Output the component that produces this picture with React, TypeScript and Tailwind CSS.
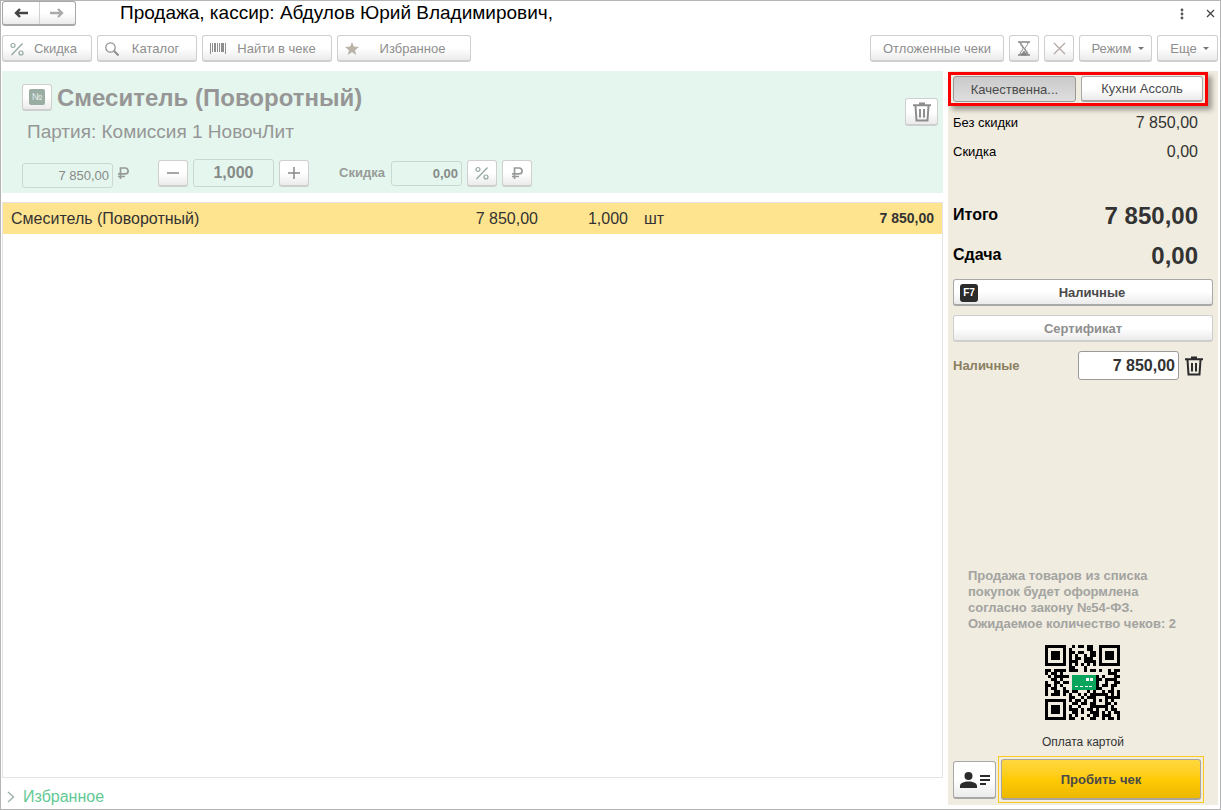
import type { ReactNode } from "react";

const softButton =
  "flex items-center justify-center rounded-[3px] border border-b-2 border-[#cfcfcf] bg-linear-to-b from-white from-50% to-[#ebebeb] pt-px text-[13px] text-[#8e8e8e]";
const hardButton =
  "flex items-center justify-center rounded-[3px] border border-b-2 border-[#a8a8a8] bg-linear-to-b from-white from-50% to-[#ebebeb] pt-px text-[13px] text-[#4a4a4a]";
const softInput =
  "rounded-[3px] border border-[#cbd8d0] bg-transparent text-[#858b88]";

const qrRows = [
  "#######..#.##.##..#######",
  "#.....#.#.....##..#.....#",
  "#.###.#.##.##..##.#.###.#",
  "#.###.#.#.#..#.##.#.###.#",
  "#.###.#.#.##.###..#.###.#",
  "#.....#.###..####.#.....#",
  "#######.#.#.#.#.#.#######",
  "........##...#...........",
  "##.####.###..#.##.#..#.##",
  "#.##.#...............###.",
  ".#.#####.........#.#...##",
  "..##.#...........##.####.",
  "#..##.##.........#..#..##",
  "##.#.#...........#.##.##.",
  "#.##..#..........##...#..",
  "#..##.##.##...#.#..#.##.#",
  "#.###.#.#..#.#.######.#.#",
  "........##..#.###...#####",
  "#######.#.##.#..#.#.#.#..",
  "#.....#..##.##.##...##.#.",
  "#.###.#.#..#...######.#..",
  "#.###.#.###.#.##.#..#.##.",
  "#.###.#..##.#..###.#.#.##",
  "#.....#.#.#...#.##.###..#",
  "#######.##..#..##..#.##.#",
];

function QrCode() {
  return (
    <svg
      width="75"
      height="75"
      viewBox="0 0 25 25"
      shapeRendering="crispEdges"
      role="img"
      aria-label="QR"
    >
      {qrRows.map((row, y) =>
        row
          .split("")
          .map((cell, x) =>
            cell === "#" ? (
              <rect key={`${x}-${y}`} x={x} y={y} width="1" height="1" />
            ) : null
          )
      )}
      <rect x="9" y="10" width="8" height="5" fill="#0aa55c" />
      <path
        d="M13.8 11.5h1M15 11.5h1"
        stroke="#fff"
        strokeWidth="1"
        strokeDasharray="0.9 0.3"
      />
      <path
        d="M10 13.8h1M11.6 13.8h1M13.2 13.8h1M14.8 13.8h1"
        stroke="#fff"
        strokeWidth="0.34"
      />
    </svg>
  );
}

function PercentIcon() {
  return (
    <svg width="14" height="14" viewBox="0 0 14 14" fill="none" stroke="#8fa69b" strokeWidth="1.2">
      <circle cx="3" cy="3.5" r="2" />
      <circle cx="11" cy="11" r="2" />
      <path d="M12.5 1.5L1.5 13" />
    </svg>
  );
}

function RubleIcon() {
  return (
    <svg
      width="12"
      height="14"
      viewBox="0 0 12 14"
      fill="none"
      stroke="#969b98"
      strokeWidth="1.7"
    >
      <path d="M3.500 13V2h4.700a2.900 2.900 0 0 1 0 5.800H1M1 10.500h7" />
    </svg>
  );
}

function TrashIcon() {
  return (
    <svg
      width="20"
      height="20"
      viewBox="0 0 20 20"
      fill="none"
      stroke="currentColor"
      strokeWidth="2"
    >
      <path d="M1 3.200h18M7 1.500h6M3.500 4l1 14.500h11l1-14.500M8 7v8.500M12 7v8.500" />
    </svg>
  );
}

function ArrowIcon({ right = false }: { right?: boolean }) {
  return (
    <svg
      width="16"
      height="12"
      viewBox="0 0 16 12"
      fill="none"
      stroke="currentColor"
      strokeWidth="2.4"
    >
      {right ? (
        <path d="M1 6h12M9 2l4 4-4 4" />
      ) : (
        <path d="M15 6H3M7 2L3 6l4 4" />
      )}
    </svg>
  );
}

function ToolButton({
  icon,
  width,
  children,
}: {
  icon: ReactNode;
  width: string;
  children: ReactNode;
}) {
  return (
    <button
      type="button"
      className={`${softButton} ${width} h-[27px] pl-[7px] pr-1`}
    >
      {icon}
      <span className="flex-1 text-center">{children}</span>
    </button>
  );
}

function Caret() {
  return (
    <svg width="6" height="3" viewBox="0 0 6 3" fill="#777">
      <path d="M0 0h6L3 3z" />
    </svg>
  );
}

function Header() {
  return (
    <header className="flex h-[25px] items-center">
      <div className="flex h-[25px] w-[74px] rounded-[3px] border border-b-2 border-[#a8a8a8] bg-linear-to-b from-white from-50% to-[#ebebeb]">
        <button
          type="button"
          aria-label="Назад"
          className="flex flex-1 items-center justify-center border-r border-[#d0d0d0] text-[#444]"
        >
          <ArrowIcon />
        </button>
        <button
          type="button"
          aria-label="Вперед"
          className="flex flex-1 items-center justify-center text-[#aaa]"
        >
          <ArrowIcon right />
        </button>
      </div>
      <h1 className="ml-11 flex-1 text-[19px]">
        Продажа, кассир: Абдулов Юрий Владимирович,
      </h1>
      <button type="button" aria-label="Меню" className="mr-[22px]">
        <svg width="4" height="12" viewBox="0 0 4 12" fill="#555">
          <circle cx="2" cy="2" r="1.400" />
          <circle cx="2" cy="6" r="1.400" />
          <circle cx="2" cy="10" r="1.400" />
        </svg>
      </button>
      <button type="button" aria-label="Закрыть" className="mr-[3px]">
        <svg width="9" height="9" viewBox="0 0 9 9" stroke="#444" strokeWidth="1.300">
          <path d="M1 1l7 7M8 1l-7 7" />
        </svg>
      </button>
    </header>
  );
}

function Toolbar() {
  return (
    <div className="mt-[9px] flex gap-[5px]">
      <ToolButton icon={<PercentIcon />} width="w-[90px]">
        Скидка
      </ToolButton>
      <ToolButton
        width="w-[100px]"
        icon={
          <svg width="14" height="14" viewBox="0 0 14 14" fill="none" stroke="#8e8e8e">
            <circle cx="5.500" cy="5.500" r="4.700" strokeWidth="1.200" />
            <path d="M9 9l4.500 4.500" strokeWidth="2" />
          </svg>
        }
      >
        Каталог
      </ToolButton>
      <ToolButton
        width="w-[130px]"
        icon={
          <svg width="16" height="11" viewBox="0 0 16 11" fill="#8e8e8e" shapeRendering="crispEdges">
            <path d="M0 0h1v11H0zM2 0h1v9H2zM4 0h2v9H4zM7 0h1v9H7zM9 0h1v9H9zM11 0h2v9h-2zM13 0h1v9h-1zM15 0h1v11h-1z" />
          </svg>
        }
      >
        Найти в чеке
      </ToolButton>
      <ToolButton
        width="w-[134px]"
        icon={
          <svg width="14" height="13" viewBox="0 0 14 13" fill="#bab4a8">
            <path d="M7 0l1.800 4.600L14 5l-4 3.200L11.300 13 7 10.300 2.700 13 4 8.200 0 5l5.200-.4z" />
          </svg>
        }
      >
        Избранное
      </ToolButton>
      <div className="flex-1" />
      <button type="button" className={`${softButton} h-[27px] w-[134px]`}>
        Отложенные чеки
      </button>
      <button
        type="button"
        aria-label="Отложить чек"
        className={`${softButton} h-[27px] w-[30px]`}
      >
        <svg width="14" height="15" viewBox="0 0 14 15" fill="none" stroke="#858585">
          <path d="M1 1h12M1 14h12" strokeWidth="1.500" />
          <path d="M3 1.500c0 3 3 4 3 6s-3 3-3 6M11 1.500c0 3-3 4-3 6s3 3 3 6M3.500 1.500L10.500 13" />
          <path d="M4 14c0-2 3-2 3-4 0 2 3 2 3 4z" fill="#858585" />
        </svg>
      </button>
      <button
        type="button"
        aria-label="Отменить"
        className={`${softButton} h-[27px] w-[30px]`}
      >
        <svg width="13" height="13" viewBox="0 0 13 13" stroke="#b5a5a5" strokeWidth="1.200">
          <path d="M1 1l11 11M12 1L1 12" />
        </svg>
      </button>
      <button type="button" className={`${softButton} h-[27px] w-[73px] gap-1.5 pl-1`}>
        Режим <Caret />
      </button>
      <button type="button" className={`${softButton} h-[27px] w-[61px] gap-1.5 pl-1`}>
        Еще <Caret />
      </button>
    </div>
  );
}

function ItemCard() {
  return (
    <section className="flex h-[122px] flex-col bg-[#e5f6ee] pl-5 pr-[5px]">
      <div className="mt-3 flex h-[28px] items-center">
        <button
          type="button"
          aria-label="Номер"
          className={`${softButton} h-[27px] w-[30px]`}
        >
          <span className="flex h-4 w-4 items-center justify-center rounded-xs bg-[#9aada3] text-[10px] leading-4 text-white/80">
            №
          </span>
        </button>
        <h2 className="ml-[5px] flex-1 pt-px text-[24px] font-bold text-[#969696]">
          Смеситель (Поворотный)
        </h2>
        <button
          type="button"
          aria-label="Удалить строку"
          className={`${softButton} mt-[30px] h-[28px] w-[33px]`}
        >
          <TrashIcon />
        </button>
      </div>
      <p className="mt-[9px] ml-[5px] text-[19px] leading-6 text-[#969696]">
        Партия: Комиссия 1 НовочЛит
      </p>
      <div className="mt-[15px] flex h-[28px] items-center">
        <input
          aria-label="Цена"
          defaultValue="7 850,00"
          className={`${softInput} mt-1 h-[25px] w-[91px] pr-[3px] text-right text-[13px]`}
        />
        <span className="ml-1">
          <RubleIcon />
        </span>
        <button
          type="button"
          aria-label="Меньше"
          className={`${softButton} ml-[29px] h-[27px] w-[30px]`}
        >
          <svg width="12" height="12" viewBox="0 0 12 12" stroke="#888" strokeWidth="1.500">
            <path d="M0 6h12" />
          </svg>
        </button>
        <input
          aria-label="Количество"
          defaultValue="1,000"
          className={`${softInput} ml-[5px] h-[28px] w-[81px] text-center text-[16px] font-bold`}
        />
        <button
          type="button"
          aria-label="Больше"
          className={`${softButton} ml-[5px] h-[27px] w-[30px]`}
        >
          <svg width="12" height="12" viewBox="0 0 12 12" stroke="#888" strokeWidth="1.500">
            <path d="M0 6h12M6 0v12" />
          </svg>
        </button>
        <label
          htmlFor="discount"
          className="ml-[30px] w-[52px] text-[13px] font-bold text-[#969b98]"
        >
          Скидка
        </label>
        <input
          id="discount"
          defaultValue="0,00"
          className={`${softInput} h-[25px] w-[71px] pr-[3px] text-right text-[13px] font-bold`}
        />
        <button
          type="button"
          aria-label="Скидка в процентах"
          className={`${softButton} ml-[5px] h-[27px] w-[30px]`}
        >
          <PercentIcon />
        </button>
        <button
          type="button"
          aria-label="Скидка в рублях"
          className={`${softButton} ml-[5px] h-[27px] w-[30px]`}
        >
          <RubleIcon />
        </button>
      </div>
    </section>
  );
}

function ReceiptList() {
  return (
    <div className="mt-[9px] flex-1 border border-[#e4e4e4]">
      <table className="w-full table-fixed text-[16px] text-[#333]">
        <tbody>
          <tr className="h-[31px] bg-[#ffe48f]">
            <td className="pl-2">Смеситель (Поворотный)</td>
            <td className="w-[100px] text-right">7 850,00</td>
            <td className="w-[90px] text-right">1,000</td>
            <td className="w-[60px] pl-4">шт</td>
            <td className="w-[254px] pr-2 text-right text-[14px] font-bold">
              7 850,00
            </td>
          </tr>
        </tbody>
      </table>
    </div>
  );
}

function PaymentPanel() {
  return (
    <aside className="mb-1 flex w-[270px] shrink-0 flex-col bg-[#f0ece0]">
      <div className="mt-px flex h-[34px] w-[260px] gap-[5px] border-[3px] border-[#fa0000] px-[2px] pt-px shadow-[4px_4px_5px_rgba(0,0,0,0.35)]">
        <button
          type="button"
          className="h-[26px] w-[123px] rounded-[3px] border border-[#999] bg-linear-to-b from-[#cacaca] to-[#dedede] pt-px text-[13px] text-[#4a4a4a]"
        >
          Качественна...
        </button>
        <button type="button" className={`${hardButton} h-[26px] flex-1`}>
          Кухни Ассоль
        </button>
      </div>

      <dl className="pl-[5px] pr-5">
        <div className="mt-[2px] flex h-[29px] items-center justify-between">
          <dt className="text-[13px] text-black">Без скидки</dt>
          <dd className="text-[16px] text-[#333]">7 850,00</dd>
        </div>
        <div className="flex h-[29px] items-center justify-between">
          <dt className="text-[13px] text-black">Скидка</dt>
          <dd className="text-[16px] text-[#333]">0,00</dd>
        </div>
        <div className="mt-[29px] flex h-10 items-center justify-between font-bold">
          <dt className="text-[16px] text-black">Итого</dt>
          <dd className="pt-px text-[24px] text-[#333]">7 850,00</dd>
        </div>
        <div className="flex h-10 items-center justify-between font-bold">
          <dt className="text-[16px] text-black">Сдача</dt>
          <dd className="pt-px text-[24px] text-[#333]">0,00</dd>
        </div>
      </dl>

      <div className="mt-1 flex flex-col gap-[9px] px-[5px]">
        <button type="button" className={`${hardButton} h-[27px] px-[6px] font-bold`}>
          <span className="flex h-[18px] w-[18px] items-center justify-center rounded-[3px] bg-[#2b2b2b] text-[10px] text-white">
            F7
          </span>
          <span className="flex-1 text-center">Наличные</span>
        </button>
        <button type="button" className={`${softButton} h-[27px] font-bold`}>
          Сертификат
        </button>
        <div className="flex h-[29px] items-center">
          <label htmlFor="cash" className="flex-1 text-[13px] font-bold text-[#8a7f62]">
            Наличные
          </label>
          <input
            id="cash"
            defaultValue="7 850,00"
            className="h-[29px] w-[101px] rounded-[3px] border border-[#999] bg-white pr-[3px] text-right text-[16px] font-bold text-[#333]"
          />
          <button
            type="button"
            aria-label="Удалить оплату"
            className="ml-[5px] mr-[9px] text-[#2b2b2b]"
          >
            <TrashIcon />
          </button>
        </div>
      </div>

      <div className="flex-1" />
      <p className="px-5 text-[13px] leading-4 font-bold text-[#a3a3a0]">
        Продажа товаров из списка
        <br />
        покупок будет оформлена
        <br />
        согласно закону №54-ФЗ.
        <br />
        Ожидаемое количество чеков: 2
      </p>
      <div className="mt-[13px] flex justify-center pr-[2px]">
        <QrCode />
      </div>
      <p className="mt-[14px] text-center text-[12px] leading-4 text-[#333]">
        Оплата картой
      </p>
      <div className="mt-[6px] mb-[2px] flex items-center gap-[2px] pl-[5px] pr-[14px]">
        <button
          type="button"
          aria-label="Покупатель"
          className={`${hardButton} h-[38px] w-[43px]`}
        >
          <svg width="30" height="18" viewBox="0 0 30 18" fill="#2b2b2b">
            <circle cx="8.500" cy="5" r="4" />
            <path d="M0 17v-2c0-3 4-4.500 8.500-4.500S17 12 17 15v2zM20 4h10v2H20zM20 8h10v2H20zM20 12h6v2h-6z" />
          </svg>
        </button>
        <div className="flex-1 border border-[#fbc81d] p-[2px]">
          <button
            type="button"
            className="h-[41px] w-full rounded-[3px] border border-b-2 border-[#aaa59a] bg-linear-to-b from-[#ffd83c] via-[#ffcb05] to-[#ecb800] pt-px text-[13px] font-bold text-[#4a4a4a]"
          >
            Пробить чек
          </button>
        </div>
      </div>
    </aside>
  );
}

export default function App() {
  return (
    <div className="flex min-h-screen flex-col border border-[#b5b5b5] bg-white pl-px pr-[2px] font-['Liberation_Sans',Arial,sans-serif] text-black">
      <Header />
      <Toolbar />
      <div className="mt-[9px] flex flex-1 gap-[5px]">
        <main className="flex min-w-0 flex-1 flex-col">
          <ItemCard />
          <ReceiptList />
          <button
            type="button"
            className="mt-[7px] flex h-6 items-center gap-2 pl-[5px] text-[16px] text-[#62c994]"
          >
            <svg width="8" height="12" viewBox="0 0 8 12" fill="none" stroke="#a5b5ad" strokeWidth="1.500">
              <path d="M1 1l5.500 5L1 11" />
            </svg>
            Избранное
          </button>
        </main>
        <PaymentPanel />
      </div>
    </div>
  );
}
